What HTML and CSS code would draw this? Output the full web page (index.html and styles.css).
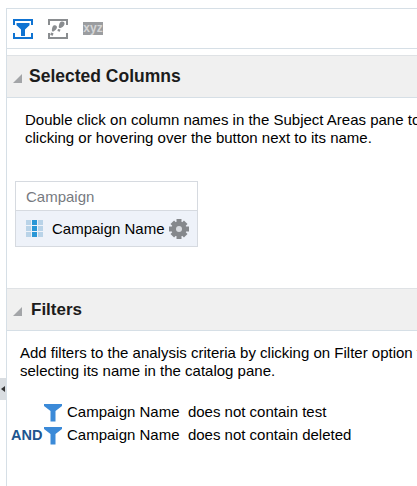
FILE: index.html
```html
<!DOCTYPE html>
<html lang="en">
<head>
<meta charset="utf-8">
<title>Criteria</title>
<link rel="stylesheet" href="styles.css">
</head>
<body>
<div class="splitter"><span class="splitter-arrow"></span></div>
<main class="pane">
  <div class="toolbar">
    <svg class="tool" width="20" height="20" viewBox="0 0 20 20"><path class="frame-blue" d="M1 6V1h18v5M1 14v5h18v-5"/><path class="fill-blue" d="M3.500 4h13v2.200L12 10.500V17H8v-6.500L3.500 6.200z"/></svg>
    <svg class="tool" width="20" height="20" viewBox="0 0 20 20"><path class="frame-grey" d="M1 6V1h18v5M1 14v5h18v-5"/><path class="fill-grey" d="M12.500 3c2.500-1 4.500 0 4 2.200-.4 1.800-2.500 3.300-4 3.800-1.300.3-2-.5-1.700-1.800.3-1.500.7-3.600 1.700-4.200zM10 10l2.500.6-.7 2.200-2.400-.8zM5.500 6.500c2.200-.8 3.800.2 3.400 2.200-.4 1.700-2.100 3.100-3.400 3.700-1.200.3-1.900-.5-1.600-1.700.2-1.600.6-3.600 1.600-4.200zM3 13.500l2.500.7-.7 2.600-2.600-.9z"/></svg>
    <span class="xyz">xyz</span>
  </div>
  <section class="panel panel-columns">
    <h2 class="panel-title"><span class="caret"></span>Selected Columns</h2>
    <p class="help help-columns">Double click on column names in the Subject Areas pane to add them to the analysis, or by<br>clicking or hovering over the button next to its name.</p>
    <div class="column-card">
      <div class="column-group">Campaign</div>
      <div class="column-row">
        <svg width="18" height="18" viewBox="0 0 18 18"><g class="cell-light"><rect x="0" y="0" width="5" height="5"/><rect x="12" y="0" width="5" height="5"/><rect x="0" y="6" width="5" height="5"/><rect x="12" y="6" width="5" height="5"/><rect x="0" y="12" width="5" height="5"/><rect x="12" y="12" width="5" height="5"/></g><g class="cell-dark"><rect x="6" y="0" width="5" height="5"/><rect x="6" y="6" width="5" height="5"/><rect x="6" y="12" width="5" height="5"/></g></svg>
        <span class="column-name">Campaign Name</span>
        <svg class="gear" width="20" height="20" viewBox="0 0 20 20"><circle class="gear-body" cx="10" cy="10" r="7.500"/><g class="gear-teeth"><rect x="7.500" y="0" width="5" height="20"/><rect x="7.500" y="0.500" width="5" height="19" transform="rotate(45 10 10)"/><rect x="7.500" y="0" width="5" height="20" transform="rotate(90 10 10)"/><rect x="7.500" y="0.500" width="5" height="19" transform="rotate(135 10 10)"/></g><circle class="gear-hole" cx="10" cy="10" r="3"/></svg>
      </div>
    </div>
  </section>
  <section class="panel panel-filters">
    <h2 class="panel-title"><span class="caret"></span><span class="title-filters">Filters</span></h2>
    <p class="help help-filters">Add filters to the analysis criteria by clicking on Filter option for the column in the Selected Columns pane, or by<br>selecting its name in the catalog pane.</p>
    <ul class="filter-list">
      <li class="filter-row"><span class="conj"></span><svg class="funnel" width="19" height="19" viewBox="0 0 19 19"><path d="M0 1h18v2l-6.500 5v10.500h-5V8L0 3z"/></svg><span>Campaign Name&nbsp; does not contain test</span></li>
      <li class="filter-row"><span class="conj">AND</span><svg class="funnel" width="19" height="19" viewBox="0 0 19 19"><path d="M0 1h18v2l-6.500 5v10.500h-5V8L0 3z"/></svg><span>Campaign Name&nbsp; does not contain deleted</span></li>
    </ul>
  </section>
</main>
</body>
</html>
```
FILE: styles.css
```css
html, body {
  margin: 0;
  height: 100%;
  overflow: hidden;
  background: #fff;
  font-family: "Liberation Sans", Arial, sans-serif;
  color: #000;
}
.splitter {
  position: absolute;
  left: 0;
  top: 378px;
  width: 6px;
  height: 22px;
  background: #d9dde1;
  display: flex;
  align-items: center;
  justify-content: center;
}
.splitter-arrow {
  width: 0;
  height: 0;
  border-style: solid;
  border-width: 3px 4px 3px 0;
  border-color: transparent #333 transparent transparent;
}
.pane {
  margin: 8px 0 0 6px;
  width: 411px;
  height: 478px;
  border-left: 1px solid #d6dfe6;
  border-top: 1px solid #d6dfe6;
  box-sizing: border-box;
  overflow: hidden;
}
.toolbar {
  height: 39px;
  border-bottom: 1px solid #d6dfe6;
  display: flex;
  align-items: center;
  gap: 15px;
  padding-left: 6px;
}
.frame-blue { fill: none; stroke: #0f73d2; stroke-width: 2; }
.fill-blue { fill: #0f73d2; }
.frame-grey { fill: none; stroke: #8a8d90; stroke-width: 2; }
.fill-grey { fill: #8a8d90; }
.xyz {
  width: 20px;
  height: 13px;
  background: #9b9da0;
  color: #d4d5d6;
  font-size: 12px;
  line-height: 12px;
  text-align: center;
  font-weight: bold;
  overflow: hidden;
}
.panel { width: 600px; }
.panel-columns { margin-top: 6px; height: 233px; }
.panel-title {
  margin: 0;
  height: 43px;
  box-sizing: border-box;
  background: #f0f0f0;
  border-top: 1px solid #dfe2e5;
  border-bottom: 1px solid #d6dfe6;
  display: flex;
  align-items: center;
  font-size: 17.500px;
  font-weight: bold;
  color: #1c1c1c;
}
.title-filters { margin-left: 2px; font-size: 17px; }
.caret {
  width: 0;
  height: 0;
  margin: 3px 7px 0 6px;
  border-style: solid;
  border-width: 0 0 9px 9px;
  border-color: transparent transparent #a3a5a8 transparent;
}
.help {
  margin: 0;
  font-size: 15px;
  line-height: 18px;
  color: #000;
  white-space: nowrap;
}
.help-columns { padding: 13px 0 0 18px; }
.column-card {
  width: 183px;
  margin: 34px 0 0 8px;
  border: 1px solid #d6dae0;
  box-sizing: border-box;
}
.column-group {
  height: 28px;
  line-height: 30px;
  padding-left: 10px;
  font-size: 15px;
  color: #777a7f;
  border-bottom: 1px solid #d6dae0;
}
.column-row {
  height: 35px;
  display: flex;
  align-items: center;
  padding-left: 10px;
  background: #eef2f9;
  font-size: 15px;
}
.column-name { margin-left: 8px; }
.gear { margin-left: 4px; }
.gear-body, .gear-teeth { fill: #85888c; }
.gear-hole { fill: #d9dce1; }
.cell-light { fill: #b9d3e8; }
.cell-dark { fill: #2a97d6; }
.help-filters { padding: 13px 0 0 13px; }
.filter-list {
  list-style: none;
  margin: 20px 0 0;
  padding: 0;
}
.filter-row {
  display: flex;
  align-items: center;
  height: 23px;
  font-size: 15px;
  color: #000;
}
.conj {
  width: 33px;
  padding-left: 4px;
  box-sizing: border-box;
  color: #20558f;
  font-weight: bold;
  font-size: 14.500px;
}
.funnel { margin: 2px 4px 0 4px; fill: #3b8ad8; }
```
